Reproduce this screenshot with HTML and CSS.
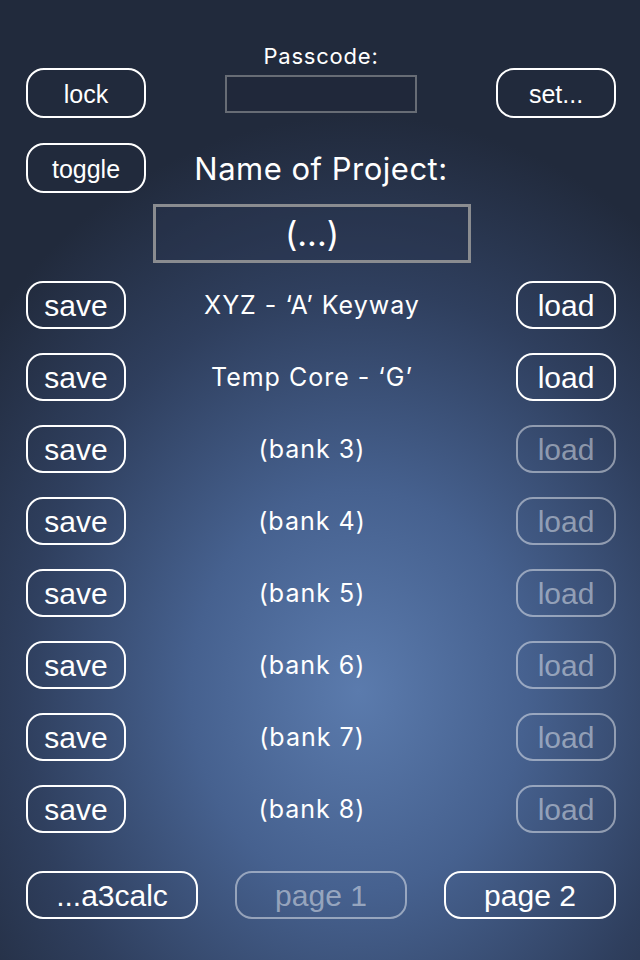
FILE: index.html
```html
<!DOCTYPE html>
<html lang="en">
<head>
    <meta charset="UTF-8">
    <meta name="viewport" content="width=device-width, initial-scale=1.0">
    <title>Project Banks</title>
    <link rel="stylesheet" href="styles.css">
</head>
<body>
    <div class="screen">
        <div class="top-row">
            <button class="btn btn-small lock-btn">lock</button>
            <div class="passcode">
                <div class="passcode-label">Passcode:</div>
                <div class="passcode-field"></div>
            </div>
            <button class="btn btn-small set-btn">set...</button>
        </div>

        <div class="name-row">
            <button class="btn btn-small">toggle</button>
            <div class="name-label">Name of Project:</div>
        </div>

        <div class="name-field">(...)</div>

        <div class="banks">
            <div class="bank">
                <button class="btn">save</button>
                <div class="bank-name">XYZ - ‘A’ Keyway</div>
                <button class="btn">load</button>
            </div>
            <div class="bank">
                <button class="btn">save</button>
                <div class="bank-name">Temp Core - ‘G’</div>
                <button class="btn">load</button>
            </div>
            <div class="bank">
                <button class="btn">save</button>
                <div class="bank-name">(bank 3)</div>
                <button class="btn disabled">load</button>
            </div>
            <div class="bank">
                <button class="btn">save</button>
                <div class="bank-name">(bank 4)</div>
                <button class="btn disabled">load</button>
            </div>
            <div class="bank">
                <button class="btn">save</button>
                <div class="bank-name">(bank 5)</div>
                <button class="btn disabled">load</button>
            </div>
            <div class="bank">
                <button class="btn">save</button>
                <div class="bank-name">(bank 6)</div>
                <button class="btn disabled">load</button>
            </div>
            <div class="bank">
                <button class="btn">save</button>
                <div class="bank-name">(bank 7)</div>
                <button class="btn disabled">load</button>
            </div>
            <div class="bank">
                <button class="btn">save</button>
                <div class="bank-name">(bank 8)</div>
                <button class="btn disabled">load</button>
            </div>
        </div>

        <div class="bottom-row">
            <button class="btn btn-wide">...a3calc</button>
            <button class="btn btn-wide disabled">page 1</button>
            <button class="btn btn-wide">page 2</button>
        </div>
    </div>
</body>
</html>
```

FILE: styles.css
```css
html, body {
    margin: 0;
    padding: 0;
    height: 100%;
}

body {
    font-family: Inter, "Liberation Sans", sans-serif;
    color: white;
    background-color: #2a3650;
    background-image: radial-gradient(ellipse 75% 60% at 56% 72%, #5b7bad 0%, #46618f 35%, #2f3f5e 70%, #212a3c 100%);
}

.screen {
    display: flex;
    flex-direction: column;
    width: 640px;
    height: 960px;
}

/* buttons */
.btn {
    box-sizing: border-box;
    width: 100px;
    height: 48px;
    border: 2px solid white;
    border-radius: 17px;
    background: transparent;
    color: white;
    font-family: "Liberation Sans", Arial, sans-serif;
    font-size: 30px;
    padding: 2px 0 0;
    line-height: 1;
}

.btn.disabled {
    border-color: rgba(255, 255, 255, 0.45);
    color: rgba(255, 255, 255, 0.45);
}

.btn-small {
    width: 120px;
    height: 50px;
    font-size: 25px;
    border-radius: 18px;
}

.btn-wide {
    width: 172px;
}

/* top area */
.top-row {
    display: grid;
    grid-template-columns: 120px 1fr 120px;
    padding: 0 24px 0 26px;
    margin-top: 44px;
}

.lock-btn,
.set-btn {
    margin-top: 24px;
}

.passcode {
    display: flex;
    flex-direction: column;
    align-items: center;
}

.passcode-label {
    font-size: 22px;
    line-height: 24px;
    letter-spacing: 0.8px;
}

.passcode-field {
    box-sizing: border-box;
    width: 192px;
    height: 38px;
    margin-top: 7px;
    border: 2px solid #676c75;
    background: rgba(30, 38, 55, 0.3);
}

.name-row {
    display: grid;
    grid-template-columns: 120px 1fr 120px;
    align-items: center;
    padding: 0 24px 0 26px;
    margin-top: 25px;
}

.name-label {
    font-size: 31px;
    letter-spacing: 0.5px;
    text-align: center;
}

.name-field {
    box-sizing: border-box;
    width: 318px;
    height: 59px;
    margin: 11px 0 0 153px;
    border: 3px solid #8a8c90;
    background: rgba(40, 52, 78, 0.35);
    font-size: 34px;
    line-height: 53px;
    text-align: center;
}

/* banks */
.banks {
    display: flex;
    flex-direction: column;
    gap: 24px;
    margin-top: 18px;
}

.bank {
    display: grid;
    grid-template-columns: 100px 1fr 100px;
    align-items: center;
    padding: 0 24px 0 26px;
}

.bank-name {
    font-size: 25px;
    letter-spacing: 1px;
    text-align: center;
    padding-right: 18px;
}

.bottom-row {
    display: flex;
    justify-content: space-between;
    padding: 0 24px 0 26px;
    margin-top: 38px;
}
```
